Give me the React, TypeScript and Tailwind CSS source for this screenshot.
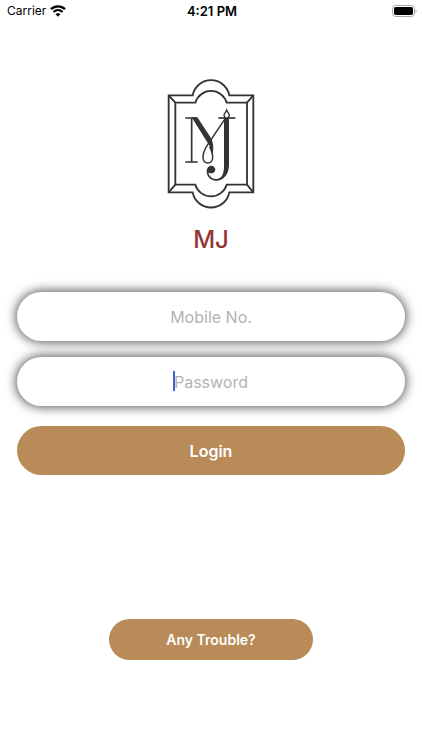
import React, { useState } from 'react';

const WifiIcon: React.FC = () => (
  <svg width="16" height="12" viewBox="0 0 16 12" fill="none" aria-hidden="true">
    <path d="M1 4.2C5 0.4 11 0.4 15 4.2" stroke="#000" strokeWidth="2.4" />
    <path d="M3.4 7C6.1 4.6 9.9 4.6 12.6 7" stroke="#000" strokeWidth="2.2" />
    <path d="M8 11.8L5.4 9.1C7 7.8 9 7.8 10.6 9.1Z" fill="#000" />
  </svg>
);

const BatteryIcon: React.FC = () => (
  <svg width="25" height="12" viewBox="0 0 25 12" aria-hidden="true">
    <rect x="0.5" y="0.5" width="22" height="11" rx="3.2" fill="none" stroke="#a6a6a6" />
    <rect x="2" y="2" width="19" height="8" rx="1.8" fill="#000" />
    <path d="M23.6 4.2C24.8 4.6 24.8 7.4 23.6 7.8Z" fill="#8a8a8a" />
  </svg>
);

const Logo: React.FC = () => (
  <svg
    width="102"
    height="140"
    viewBox="0 0 306 420"
    fill="none"
    stroke="#333"
    strokeWidth="5.5"
    role="img"
    aria-label="MJ"
  >
    {/* frame */}
    <path d="M26 64H98A56 56 0 0 1 208 64H280V355H208A56 56 0 0 1 98 355H26Z" />
    <path d="M46 86H106A49 49 0 0 1 200 86H261V332H200A49 49 0 0 1 106 332H46Z" />
    <path d="M26 64L46 86M280 64L261 86M26 355L46 332M280 355L261 332" />

    {/* monogram */}
    <path d="M76 132H108M76 264H113M95 132V264" strokeWidth="5" />
    <path d="M95 130H112L151 189C160 204 162 221 158 240C154 223 148 213 139 200Z" fill="#333" stroke="none" />
    <path d="M194 136L143 212C132 229 128 239 129 252C131 272 156 272 158 252C159 242 155 231 149 218" strokeWidth="4.5" />
    <path d="M175 132H226" strokeWidth="5" />
    <path d="M200 108C197 116 192 119 192 124C193 129 197 132 200 134C203 132 207 129 208 124C208 119 203 116 200 108Z" fill="#fff" strokeWidth="4" />
    <path d="M192 132H207V272C207 302 190 320 168 320C151 320 140 307 140 292C140 282 146 275 154 275C161 275 166 281 166 287C166 293 160 298 153 298C148 298 146 296 145 294C146 305 155 315 168 315C184 315 192 303 192 276Z" fill="#333" stroke="none" />
  </svg>
);

interface FieldProps {
  label: string;
  type: string;
  active?: boolean;
}

const Field: React.FC<FieldProps> = ({ label, type, active }) => {
  const [value, setValue] = useState('');

  return (
    <div className="relative">
      <input
        type={type}
        value={value}
        placeholder={label}
        aria-label={label}
        onChange={(e) => setValue(e.target.value)}
        className="block h-[49px] w-full rounded-full bg-white text-center text-base text-black caret-[#3e62d9] shadow-[0_0_11px_1px_rgba(0,0,0,0.7)] outline-none placeholder:text-[#b3b3b3]"
      />
      {active && !value && (
        <span className="pointer-events-none absolute top-[14px] left-1/2 -ml-[38px] h-5 w-0.5 bg-[#3e62d9]" />
      )}
    </div>
  );
};

const App: React.FC = () => {
  return (
    <div className="min-h-screen bg-white font-[Inter,sans-serif]">
      <header className="grid h-[22px] grid-cols-3 items-center px-[7px] pr-[5px] leading-4 text-black">
        <div className="flex items-center gap-1">
          <span className="text-xs">Carrier</span>
          <WifiIcon />
        </div>
        <time className="text-center text-[13px] font-semibold">4:21 PM</time>
        <div className="flex justify-end">
          <BatteryIcon />
        </div>
      </header>

      <main className="flex flex-col items-center px-[17px] pt-[52px]">
        <Logo />
        <h1 className="mt-2 text-2xl leading-9 font-medium text-[#943634]">MJ</h1>

        <form className="mt-[34px] flex w-full flex-col gap-4" onSubmit={(e) => e.preventDefault()}>
          <Field label="Mobile No." type="tel" />
          <Field label="Password" type="password" active />
          <button
            type="submit"
            className="mt-1 h-[49px] w-full rounded-full bg-[#b88b58] text-base font-semibold text-white"
          >
            Login
          </button>
        </form>

        <button
          type="button"
          className="mt-36 h-[41px] w-[204px] rounded-full bg-[#b88b58] text-sm font-semibold text-white"
        >
          Any Trouble?
        </button>
      </main>
    </div>
  );
};

export default App;
